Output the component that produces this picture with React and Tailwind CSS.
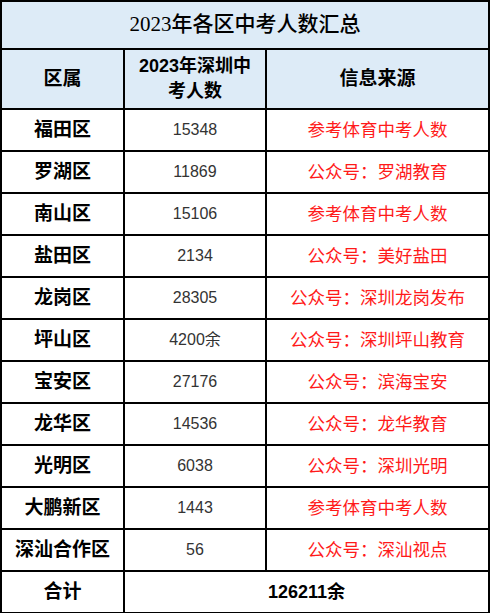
const rows = [
  { name: "福田区", count: "15348", source: "参考体育中考人数" },
  { name: "罗湖区", count: "11869", source: "公众号：罗湖教育" },
  { name: "南山区", count: "15106", source: "参考体育中考人数" },
  { name: "盐田区", count: "2134", source: "公众号：美好盐田" },
  { name: "龙岗区", count: "28305", source: "公众号：深圳龙岗发布" },
  { name: "坪山区", count: "4200余", source: "公众号：深圳坪山教育" },
  { name: "宝安区", count: "27176", source: "公众号：滨海宝安" },
  { name: "龙华区", count: "14536", source: "公众号：龙华教育" },
  { name: "光明区", count: "6038", source: "公众号：深圳光明" },
  { name: "大鹏新区", count: "1443", source: "参考体育中考人数" },
  { name: "深汕合作区", count: "56", source: "公众号：深汕视点" },
];

const sans = "font-['Liberation_Sans','Noto_Sans_CJK_SC',sans-serif]";

export default function App() {
  return (
    <div className="w-[490px] h-[613px] bg-white">
      <table className={`w-[490px] border-collapse table-fixed ${sans}`}>
        <colgroup>
          <col className="w-[123px]" />
          <col className="w-[142px]" />
          <col />
        </colgroup>
        <tbody>
          <tr className="h-[48px] bg-[#ddebf7]">
            <td
              colSpan={3}
              className="border-2 border-black text-center text-[21px] font-medium text-black font-['Liberation_Serif','Noto_Sans_CJK_SC',serif]"
            >
              2023年各区中考人数汇总
            </td>
          </tr>
          <tr className="h-[60px] bg-[#ddebf7] text-black font-bold">
            <td className="border-2 border-black text-center text-[19px]">区属</td>
            <td className="border-2 border-black text-center text-[18px] leading-[25px]">
              2023年深圳中
              <br />
              考人数
            </td>
            <td className="border-2 border-black text-center text-[19px]">信息来源</td>
          </tr>
          {rows.map((r) => (
            <tr key={r.name} className="h-[42px]">
              <td className="border-2 border-black text-center text-[19px] font-bold text-black">
                {r.name}
              </td>
              <td className="border-2 border-black text-center text-[16px] text-[#333]">
                {r.count}
              </td>
              <td className="border-2 border-black text-center text-[17.5px] text-[#ff1a1a]">
                {r.source}
              </td>
            </tr>
          ))}
          <tr className="h-[42px]">
            <td className="border-2 border-black text-center text-[19px] font-bold text-black">
              合计
            </td>
            <td colSpan={2} className="border-2 border-black text-center text-[18px] font-bold text-black">
              126211余
            </td>
          </tr>
        </tbody>
      </table>
    </div>
  );
}
